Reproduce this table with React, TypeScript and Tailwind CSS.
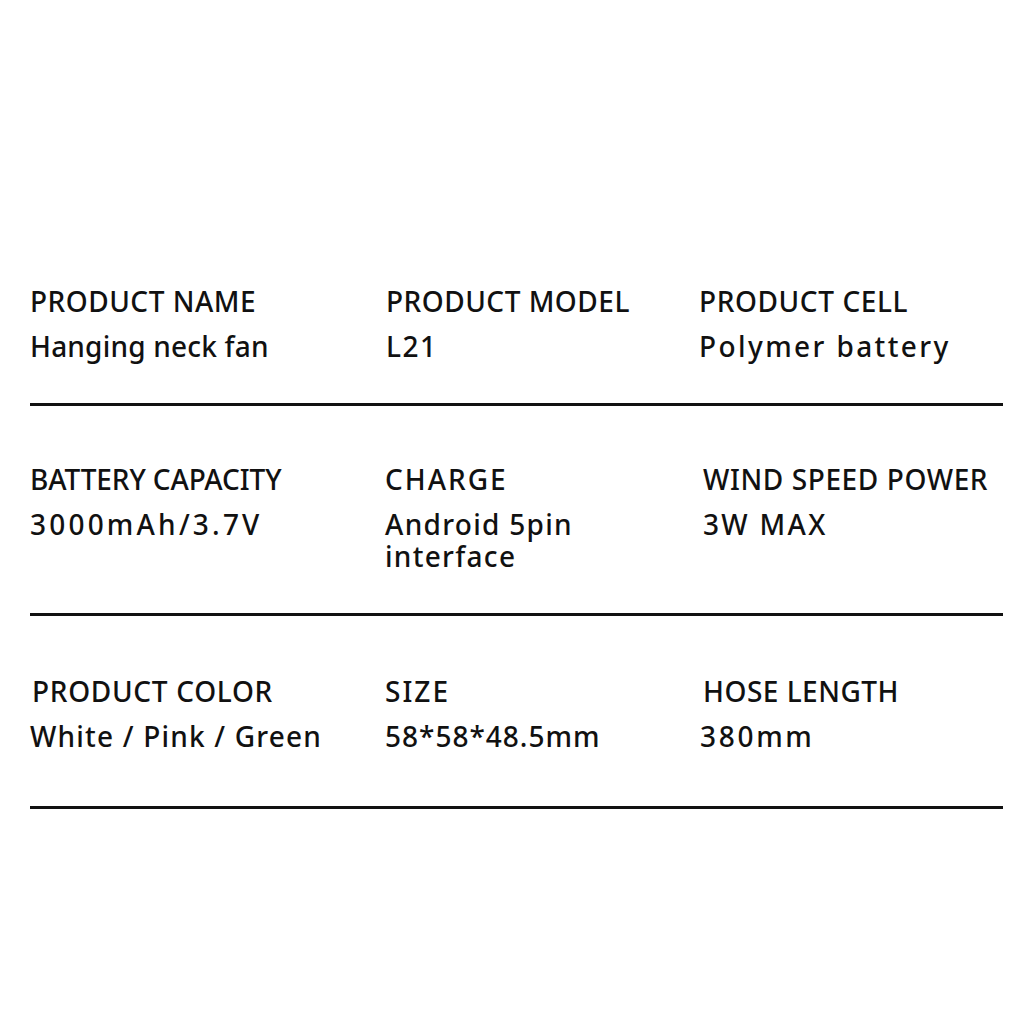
import React from "react";

type Cell = { label: string; value: string[]; lc: string; vc: string };

const rows: { h: string; pt: string; cells: Cell[] }[] = [
  {
    h: "h-[126px]",
    pt: "pt-[3px]",
    cells: [
      { label: "PRODUCT NAME", value: ["Hanging neck fan"], lc: "tracking-[0.5px]", vc: "tracking-[0.2px]" },
      { label: "PRODUCT MODEL", value: ["L21"], lc: "tracking-[0.5px]", vc: "tracking-[1.5px]" },
      { label: "PRODUCT CELL", value: ["Polymer battery"], lc: "tracking-[0.6px]", vc: "tracking-[2.4px]" },
    ],
  },
  {
    h: "h-[210px]",
    pt: "pt-[55px]",
    cells: [
      { label: "BATTERY CAPACITY", value: ["3000mAh/3.7V"], lc: "tracking-[-0.1px]", vc: "tracking-[3.2px]" },
      { label: "CHARGE", value: ["Android 5pin", "interface"], lc: "tracking-[2px] -ml-[1px]", vc: "tracking-[1.3px] -ml-[1px]" },
      { label: "WIND SPEED POWER", value: ["3W MAX"], lc: "tracking-[0.6px] ml-[4px]", vc: "tracking-[2.3px] ml-[4px]" },
    ],
  },
  {
    h: "h-[193px]",
    pt: "pt-[57px]",
    cells: [
      { label: "PRODUCT COLOR", value: ["White / Pink / Green"], lc: "tracking-[0.7px] ml-[2px]", vc: "tracking-[1.2px]" },
      { label: "SIZE", value: ["58*58*48.5mm"], lc: "tracking-[2px] -ml-[1px]", vc: "tracking-[1px] -ml-[1px]" },
      { label: "HOSE LENGTH", value: ["380mm"], lc: "tracking-[0.5px] ml-[4px]", vc: "tracking-[2.7px] ml-[1px]" },
    ],
  },
];

export default function App() {
  return (
    <div
      className="w-[1024px] h-[1024px] bg-white text-[#111] pt-[280px] pl-[30px] pr-[21px]"
      style={{ fontFamily: '"Noto Sans", "Open Sans", sans-serif' }}
    >
      {rows.map((r, i) => (
        <div
          key={i}
          className={`${r.h} ${r.pt} border-b-[3px] border-[#111] grid grid-cols-[356px_313px_1fr]`}
        >
          {r.cells.map((c, j) => (
            <div key={j} className="flex flex-col">
              <div className={`text-[28px] font-medium leading-[36px] mb-[11px] whitespace-nowrap ${c.lc}`}>
                {c.label}
              </div>
              <div className={`text-[28px] font-medium leading-[32px] whitespace-nowrap ${c.vc}`}>
                {c.value.map((v, k) => (
                  <div key={k}>{v}</div>
                ))}
              </div>
            </div>
          ))}
        </div>
      ))}
    </div>
  );
}
